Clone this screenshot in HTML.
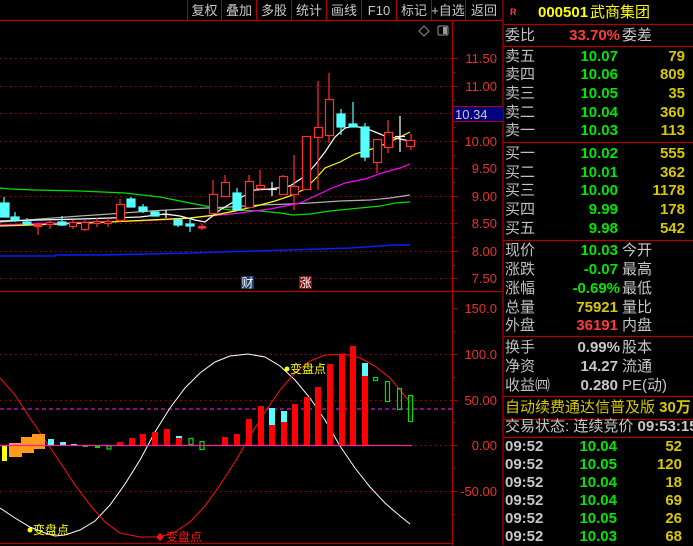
<!DOCTYPE html>
<html><head><meta charset="utf-8"><style>
html,body{margin:0;padding:0;background:#000;width:693px;height:545px;overflow:hidden}
.p{position:absolute;font-family:"Liberation Sans","Noto Sans CJK SC",sans-serif;font-size:15px;line-height:18px;white-space:nowrap}
.l{color:#c0c0c0;left:505px}
.n{font-weight:bold;text-align:right}
.g{color:#00e600}.y{color:#d8c800}.r{color:#ff3c3c}.w{color:#c8c8c8}
</style></head><body>
<svg width="693" height="545" style="position:absolute;left:0;top:0" font-family="Liberation Sans,Noto Sans CJK SC,sans-serif">
<!-- frame lines -->
<g stroke="#b00000" stroke-width="1.2" fill="none">
<line x1="0" y1="20.5" x2="503" y2="20.5"/>
<line x1="452.5" y1="20" x2="452.5" y2="545"/>
<line x1="0" y1="291.5" x2="503" y2="291.5"/>
<line x1="503" y1="0" x2="503" y2="545"/>
<line x1="503" y1="24.5" x2="693" y2="24.5"/>
<line x1="503" y1="46.5" x2="693" y2="46.5"/>
<line x1="503" y1="142.5" x2="693" y2="142.5"/>
<line x1="503" y1="240.5" x2="693" y2="240.5"/>
<line x1="503" y1="336.5" x2="693" y2="336.5"/>
<line x1="503" y1="396.5" x2="693" y2="396.5"/>
<line x1="503" y1="419.5" x2="693" y2="419.5"/>
<line x1="503" y1="437.5" x2="693" y2="437.5"/>
<line x1="0" y1="543.5" x2="452" y2="543.5"/>
</g>
<!-- toolbar -->
<g stroke="#b00000"><line x1="187.5" y1="0" x2="187.5" y2="20"/><line x1="221.5" y1="0" x2="221.5" y2="20"/><line x1="256.5" y1="0" x2="256.5" y2="20"/><line x1="291.5" y1="0" x2="291.5" y2="20"/><line x1="326.5" y1="0" x2="326.5" y2="20"/><line x1="361.5" y1="0" x2="361.5" y2="20"/><line x1="396.5" y1="0" x2="396.5" y2="20"/><line x1="431.5" y1="0" x2="431.5" y2="20"/><line x1="465.5" y1="0" x2="465.5" y2="20"/></g>
<g fill="#c8c8c8" font-size="13" text-anchor="middle"><text x="204.5" y="15">复权</text><text x="239" y="15">叠加</text><text x="274" y="15">多股</text><text x="309" y="15">统计</text><text x="344" y="15">画线</text><text x="379" y="15">F10</text><text x="414" y="15">标记</text><text x="448" y="15">+自选</text><text x="484" y="15">返回</text></g>
<!-- icons -->
<path d="M424 26 L429 31 L424 36 L419 31 Z" stroke="#888" fill="none"/>
<rect x="438" y="26" width="10" height="9" rx="1.5" stroke="#999" fill="none"/><rect x="443" y="27" width="4" height="7" fill="#999"/>
<!-- price grid -->
<g stroke="#b00000" stroke-dasharray="1.5,3.5"><line x1="0" y1="58.5" x2="452" y2="58.5"/><line x1="0" y1="86.5" x2="452" y2="86.5"/><line x1="0" y1="113.5" x2="452" y2="113.5"/><line x1="0" y1="141.5" x2="452" y2="141.5"/><line x1="0" y1="168.5" x2="452" y2="168.5"/><line x1="0" y1="196.5" x2="452" y2="196.5"/><line x1="0" y1="223.5" x2="452" y2="223.5"/><line x1="0" y1="251.5" x2="452" y2="251.5"/><line x1="0" y1="278.5" x2="452" y2="278.5"/>
<line x1="0" y1="354.5" x2="452" y2="354.5"/><line x1="0" y1="400.5" x2="452" y2="400.5"/><line x1="0" y1="445.5" x2="452" y2="445.5"/><line x1="0" y1="491.5" x2="452" y2="491.5"/></g>
<g stroke="#b00000"><line x1="452" y1="58.5" x2="457" y2="58.5"/><line x1="452" y1="72.5" x2="455" y2="72.5"/><line x1="452" y1="86.5" x2="457" y2="86.5"/><line x1="452" y1="100.5" x2="455" y2="100.5"/><line x1="452" y1="127.5" x2="455" y2="127.5"/><line x1="452" y1="141.5" x2="457" y2="141.5"/><line x1="452" y1="155.5" x2="455" y2="155.5"/><line x1="452" y1="168.5" x2="457" y2="168.5"/><line x1="452" y1="182.5" x2="455" y2="182.5"/><line x1="452" y1="196.5" x2="457" y2="196.5"/><line x1="452" y1="210.5" x2="455" y2="210.5"/><line x1="452" y1="223.5" x2="457" y2="223.5"/><line x1="452" y1="237.5" x2="455" y2="237.5"/><line x1="452" y1="251.5" x2="457" y2="251.5"/><line x1="452" y1="265.5" x2="455" y2="265.5"/><line x1="452" y1="278.5" x2="457" y2="278.5"/>
<line x1="452" y1="308.5" x2="457" y2="308.5"/><line x1="452" y1="331.5" x2="455" y2="331.5"/><line x1="452" y1="354.5" x2="457" y2="354.5"/><line x1="452" y1="377.5" x2="455" y2="377.5"/><line x1="452" y1="400.5" x2="457" y2="400.5"/><line x1="452" y1="422.5" x2="455" y2="422.5"/><line x1="452" y1="445.5" x2="457" y2="445.5"/><line x1="452" y1="468.5" x2="455" y2="468.5"/><line x1="452" y1="491.5" x2="457" y2="491.5"/><line x1="452" y1="514.5" x2="455" y2="514.5"/></g>
<g fill="#e83030" font-size="13" text-anchor="end"><text x="497" y="63">11.50</text><text x="497" y="91">11.00</text><text x="497" y="146">10.00</text><text x="497" y="173">9.50</text><text x="497" y="201">9.00</text><text x="497" y="228">8.50</text><text x="497" y="256">8.00</text><text x="497" y="283">7.50</text>
<text x="497" y="313">150.0</text><text x="497" y="359">100.0</text><text x="497" y="405">50.00</text><text x="497" y="450">0.00</text><text x="497" y="496">-50.00</text></g>
<rect x="453" y="106" width="50" height="16" fill="#000080"/><line x1="453" y1="106.5" x2="503" y2="106.5" stroke="#b00000"/><line x1="453" y1="121.5" x2="503" y2="121.5" stroke="#b00000"/>
<text x="455" y="119" fill="#c8c8c8" font-size="13">10.34</text>
<!-- MAs -->
<g fill="none" stroke-width="1.2">
<polyline stroke="#0020ff" stroke-width="1.6" points="0,256 55,256 56,255 100,255 150,254 190,253 220,252 255,251 290,250 320,249 350,248 380,246 395,245 410,245"/>
<polyline stroke="#00e000" points="0,188 10,189 35,190 80,191 125,193 160,197 190,203 205,206 230,210 260,211 280,213 293,215 310,214 330,211 360,208 380,206 395,203 410,202"/>
<polyline stroke="#b0b0b0" points="0,222 40,219 80,216 110,214 150,211 185,209 230,207 260,205 290,204 310,203 340,201 370,200 390,198 410,195"/>
<polyline stroke="#ff00ff" points="0,225 60,223 135,221 180,219 210,216 240,213 270,209 300,203 315,196 330,189 345,183 365,179 385,172 400,168 410,164"/>
<polyline stroke="#ffff00" points="0,226 60,224 110,222 150,220 190,218 215,215 240,210 260,205 275,201 290,196 305,189 318,176 325,168 340,162 355,154 375,148 390,142 400,137 410,132"/>
<polyline stroke="#ffffff" points="0,221 40,220 80,219 110,218 140,217 165,214 180,216 195,220 205,222 220,210 240,198 255,190 270,189 290,186 305,176 315,165 325,152 335,137 345,128 355,126 370,130 385,136 395,138 410,141"/>
</g>
<!-- candles -->
<g stroke-width="1.2">
<g stroke="#55ffff" fill="#55ffff">
<line x1="4" y1="197" x2="4" y2="217"/><rect x="0" y="203" width="9" height="14"/>
<line x1="15" y1="212" x2="15" y2="222"/><rect x="11" y="217" width="8" height="3"/>
<line x1="27" y1="218" x2="27" y2="226"/><rect x="23" y="222" width="8" height="2"/>
<line x1="62" y1="216" x2="62" y2="226"/><rect x="58" y="222" width="8" height="3"/>
<line x1="131" y1="197" x2="131" y2="207"/><rect x="127" y="199" width="8" height="8"/>
<line x1="143" y1="204" x2="143" y2="213"/><rect x="139" y="207" width="8" height="4"/>
<rect x="151" y="212" width="8" height="4"/>
<line x1="178" y1="218" x2="178" y2="227"/><rect x="174" y="220" width="8" height="5"/>
<line x1="190" y1="219" x2="190" y2="232"/><rect x="186" y="224" width="8" height="2"/>
<line x1="237" y1="188" x2="237" y2="211"/><rect x="233" y="193" width="8" height="17"/>
<line x1="341" y1="109" x2="341" y2="135"/><rect x="337" y="114" width="8" height="13"/>
<line x1="353" y1="102" x2="353" y2="127"/><rect x="349" y="124" width="8" height="3"/>
<line x1="365" y1="123" x2="365" y2="161"/><rect x="361" y="127" width="8" height="30"/>
</g>
<g stroke="#ff3030" fill="#000">
<line x1="38" y1="222" x2="38" y2="235"/><rect x="34.5" y="224.5" width="7" height="2" fill="#ff3030"/>
<line x1="50" y1="220" x2="50" y2="229"/><rect x="46.5" y="222.5" width="7" height="2"/>
<line x1="73" y1="220" x2="73" y2="229"/><rect x="69.5" y="222.5" width="7" height="4"/>
<line x1="85" y1="220" x2="85" y2="231"/><rect x="81.5" y="222.5" width="7" height="7"/>
<line x1="97" y1="218" x2="97" y2="227"/><rect x="93.5" y="221.5" width="7" height="2"/>
<line x1="108" y1="218" x2="108" y2="227"/><rect x="104.5" y="221.5" width="7" height="2"/>
<line x1="120" y1="199" x2="120" y2="222"/><rect x="116.5" y="204.5" width="8" height="16"/>
<line x1="202" y1="224" x2="202" y2="230"/><rect x="198.5" y="226.5" width="7" height="1.5" fill="#ff3030"/>
<line x1="213" y1="180" x2="213" y2="214"/><rect x="209.5" y="194.5" width="8" height="19"/>
<line x1="225" y1="175" x2="225" y2="197"/><rect x="221.5" y="182.5" width="8" height="14"/>
<line x1="249" y1="175" x2="249" y2="208"/><rect x="245.5" y="181.5" width="8" height="26"/>
<line x1="260" y1="170" x2="260" y2="190"/><rect x="256.5" y="185.5" width="8" height="3"/>
<line x1="283" y1="175" x2="283" y2="195"/><rect x="279.5" y="176.5" width="8" height="18"/>
<line x1="294" y1="155" x2="294" y2="210"/><rect x="290.5" y="186.5" width="8" height="8"/>
<line x1="306" y1="136" x2="306" y2="190"/><rect x="302.5" y="136.5" width="8" height="53"/>
<line x1="318" y1="81" x2="318" y2="190"/><rect x="314.5" y="127.5" width="8" height="10"/>
<line x1="329" y1="73" x2="329" y2="143"/><rect x="325.5" y="99.5" width="8" height="36"/>
<line x1="377" y1="139" x2="377" y2="173"/><rect x="373.5" y="139.5" width="8" height="23"/>
<line x1="388" y1="120" x2="388" y2="153"/><rect x="384.5" y="132.5" width="8" height="15"/>
<line x1="411" y1="134" x2="411" y2="150"/><rect x="406.5" y="140.5" width="8" height="6"/>
</g>
<g stroke="#fff"><line x1="272" y1="182" x2="272" y2="196"/><line x1="268" y1="189.5" x2="277" y2="189.5"/><line x1="400" y1="116" x2="400" y2="152"/><line x1="395" y1="136.5" x2="405" y2="136.5"/><line x1="166" y1="210" x2="166" y2="218"/><line x1="162" y1="214.5" x2="171" y2="214.5"/></g>
</g>
<rect x="241" y="276" width="13" height="13" fill="#1a3a6a"/><text x="247.5" y="287" fill="#fff" font-size="12" text-anchor="middle">财</text>
<rect x="299" y="276" width="13" height="13" fill="#7a1010"/><text x="305.5" y="287" fill="#fff" font-size="12" text-anchor="middle">涨</text>
<!-- lower indicator -->
<line x1="0" y1="409" x2="452" y2="409" stroke="#ff20ff" stroke-dasharray="4,3"/>
<polyline fill="none" stroke="#fff" stroke-width="1" points="0,508 15,518 30,527 45,533 55,536 65,535 80,530 95,521 110,505 125,484 140,460 155,432 170,408 185,388 200,373 215,362 230,356 248,354 265,357 280,366 295,380 310,398 325,420 340,446 355,468 370,487 385,503 400,516 410,524"/>
<polyline fill="none" stroke="#ff1010" stroke-width="1" points="0,378 15,395 30,418 45,440 60,462 75,485 90,505 105,522 120,533 140,537 160,537 175,532 190,522 205,506 220,485 235,462 250,436 265,412 280,390 295,373 310,361 325,355 345,354 360,358 375,366 390,378 405,396 410,402"/>
<g fill="#ff0000">
<rect x="117" y="442" width="6" height="3"/><rect x="129" y="438" width="6" height="7"/><rect x="140" y="434" width="6" height="11"/><rect x="152" y="432" width="6" height="13"/><rect x="164" y="429" width="6" height="16"/><rect x="176" y="438" width="6" height="7"/>
<rect x="222" y="437" width="6" height="8"/><rect x="234" y="434" width="6" height="11"/><rect x="246" y="419" width="6" height="26"/><rect x="258" y="406" width="6" height="39"/><rect x="269" y="425" width="6" height="20"/><rect x="281" y="422" width="6" height="23"/><rect x="292" y="404" width="6" height="41"/><rect x="304" y="397" width="6" height="48"/><rect x="315" y="387" width="6" height="58"/><rect x="327" y="364" width="6" height="81"/><rect x="339" y="354" width="6" height="91"/><rect x="350" y="346" width="6" height="99"/><rect x="362" y="376" width="6" height="69"/>
</g>
<g fill="#55ffff"><rect x="269" y="408" width="6" height="17"/><rect x="281" y="411" width="6" height="11"/><rect x="362" y="363" width="6" height="13"/><rect x="176" y="436" width="6" height="2"/><rect x="48" y="439" width="6" height="7"/><rect x="60" y="442" width="6" height="3"/><rect x="71" y="444" width="6" height="2"/></g>
<g fill="none" stroke="#00e000" stroke-width="1.2"><rect x="189" y="438.5" width="4" height="6"/><rect x="200" y="441.5" width="4" height="8"/><rect x="107" y="446" width="4" height="3"/><rect x="373.5" y="377.5" width="4" height="3"/><rect x="385.5" y="381.5" width="4" height="20"/><rect x="397.5" y="388.5" width="4" height="21"/><rect x="408.5" y="395.5" width="4" height="26"/></g>
<g fill="#00e000"><rect x="83" y="445" width="5" height="2"/><rect x="95" y="445" width="5" height="3"/></g>
<rect x="9" y="443" width="13" height="14" fill="#ff9a1a"/><rect x="21" y="437" width="13" height="16" fill="#ff9a1a"/><rect x="32" y="434" width="13" height="15" fill="#ff9a1a"/>
<rect x="2" y="445" width="5" height="16" fill="#ffff00"/>
<line x1="0" y1="445.5" x2="412" y2="445.5" stroke="#ff20a0" stroke-width="1.2"/>
<circle cx="287" cy="369" r="2.5" fill="#ffff00"/><text x="290" y="373" fill="#ffff00" font-size="12">变盘点</text>
<circle cx="30" cy="530" r="2.5" fill="#ffff00"/><text x="33" y="534" fill="#ffff00" font-size="12">变盘点</text>
<path d="M160 533 L164 537 L160 541 L156 537Z" fill="#ff1010"/><text x="166" y="541" fill="#ff1010" font-size="12">变盘点</text>
</svg>
<div class="p" style="left:510px;top:3px;color:#ff3c3c;font-size:9px;font-weight:bold">R</div>
<div class="p" style="left:538px;top:4px;color:#ffff00;font-weight:bold">000501</div>
<div class="p" style="left:590px;top:4px;color:#ffff00">武商集团</div>
<div class="p l" style="top:27px">委比</div><div class="p n r" style="right:73px;top:27px">33.70%</div><div class="p w" style="left:622px;top:27px">委差</div>
<div class="p l" style="top:48px">卖五</div><div class="p n g" style="right:75px;top:48px">10.07</div><div class="p n y" style="right:8px;top:48px">79</div>
<div class="p l" style="top:66px">卖四</div><div class="p n g" style="right:75px;top:66px">10.06</div><div class="p n y" style="right:8px;top:66px">809</div>
<div class="p l" style="top:85px">卖三</div><div class="p n g" style="right:75px;top:85px">10.05</div><div class="p n y" style="right:8px;top:85px">35</div>
<div class="p l" style="top:104px">卖二</div><div class="p n g" style="right:75px;top:104px">10.04</div><div class="p n y" style="right:8px;top:104px">360</div>
<div class="p l" style="top:122px">卖一</div><div class="p n g" style="right:75px;top:122px">10.03</div><div class="p n y" style="right:8px;top:122px">113</div>
<div class="p l" style="top:145px">买一</div><div class="p n g" style="right:75px;top:145px">10.02</div><div class="p n y" style="right:8px;top:145px">555</div>
<div class="p l" style="top:164px">买二</div><div class="p n g" style="right:75px;top:164px">10.01</div><div class="p n y" style="right:8px;top:164px">362</div>
<div class="p l" style="top:182px">买三</div><div class="p n g" style="right:75px;top:182px">10.00</div><div class="p n y" style="right:8px;top:182px">1178</div>
<div class="p l" style="top:201px">买四</div><div class="p n g" style="right:75px;top:201px">9.99</div><div class="p n y" style="right:8px;top:201px">178</div>
<div class="p l" style="top:220px">买五</div><div class="p n g" style="right:75px;top:220px">9.98</div><div class="p n y" style="right:8px;top:220px">542</div>
<div class="p l" style="top:242px">现价</div><div class="p n g" style="right:75px;top:242px">10.03</div><div class="p w" style="left:622px;top:242px">今开</div>
<div class="p l" style="top:261px">涨跌</div><div class="p n g" style="right:75px;top:261px">-0.07</div><div class="p w" style="left:622px;top:261px">最高</div>
<div class="p l" style="top:280px">涨幅</div><div class="p n g" style="right:73px;top:280px">-0.69%</div><div class="p w" style="left:622px;top:280px">最低</div>
<div class="p l" style="top:299px">总量</div><div class="p n y" style="right:75px;top:299px">75921</div><div class="p w" style="left:622px;top:299px">量比</div>
<div class="p l" style="top:317px">外盘</div><div class="p n r" style="right:75px;top:317px">36191</div><div class="p w" style="left:622px;top:317px">内盘</div>
<div class="p l" style="top:339px">换手</div><div class="p n w" style="right:73px;top:339px">0.99%</div><div class="p w" style="left:622px;top:339px">股本</div>
<div class="p l" style="top:358px">净资</div><div class="p n w" style="right:75px;top:358px">14.27</div><div class="p w" style="left:622px;top:358px">流通</div>
<div class="p l" style="top:377px">收益㈣</div><div class="p n w" style="right:75px;top:377px">0.280</div><div class="p w" style="left:622px;top:377px">PE(动)</div>
<div class="p" style="left:505px;top:399px;color:#d8c800">自动续费通达信普及版 <b>30万</b></div>
<div class="p" style="left:505px;top:418px;color:#c8c8c8">交易状态: 连续竞价 <b>09:53:15</b></div>
<div class="p n w" style="left:505px;top:438px">09:52</div><div class="p n g" style="right:76px;top:438px">10.04</div><div class="p n y" style="right:11px;top:438px">52</div>
<div class="p n w" style="left:505px;top:456px">09:52</div><div class="p n g" style="right:76px;top:456px">10.05</div><div class="p n y" style="right:11px;top:456px">120</div>
<div class="p n w" style="left:505px;top:474px">09:52</div><div class="p n g" style="right:76px;top:474px">10.04</div><div class="p n y" style="right:11px;top:474px">18</div>
<div class="p n w" style="left:505px;top:492px">09:52</div><div class="p n g" style="right:76px;top:492px">10.04</div><div class="p n y" style="right:11px;top:492px">69</div>
<div class="p n w" style="left:505px;top:510px">09:52</div><div class="p n g" style="right:76px;top:510px">10.05</div><div class="p n y" style="right:11px;top:510px">26</div>
<div class="p n w" style="left:505px;top:528px">09:52</div><div class="p n g" style="right:76px;top:528px">10.03</div><div class="p n y" style="right:11px;top:528px">68</div>
</body></html>
